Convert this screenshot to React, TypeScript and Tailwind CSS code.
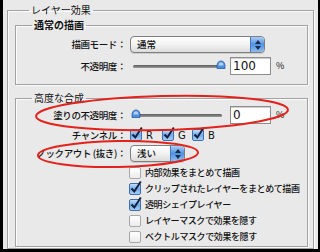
import React from 'react'

const jp = { fontFamily: '"Noto Sans CJK JP", "Noto Sans", sans-serif' }

function Stepper() {
  return (
    <div className="w-[14px] h-full rounded-r-[4px] bg-gradient-to-b from-[#a9cdf3] via-[#4f93e4] to-[#8cbcf0] border-l border-[#4a78b8] flex flex-col items-center justify-center gap-[2px]">
      <svg width="6" height="4" viewBox="0 0 6 4"><path d="M3 0L6 4H0Z" fill="#1d2b46" /></svg>
      <svg width="6" height="4" viewBox="0 0 6 4"><path d="M0 0H6L3 4Z" fill="#1d2b46" /></svg>
    </div>
  )
}

function Select({ value, width }: { value: string; width: string }) {
  return (
    <div className={`${width} h-[17px] flex flex-row rounded-[4px] border border-[#7f7f7f] bg-gradient-to-b from-white via-[#f2f2f2] to-[#dcdcdc] shadow-[0_1px_0_rgba(0,0,0,0.12)]`}>
      <div className="flex-1 pl-[6px] text-[9.5px] leading-[15px] font-medium text-[#111]" style={jp}>
        {value}
      </div>
      <Stepper />
    </div>
  )
}

function Knob({ pos }: { pos: string }) {
  return (
    <svg width="10" height="10" viewBox="0 0 10 10" className={`absolute top-[-5px] ${pos}`}>
      <path d="M1 6C1 2.5 2.8 1 5 1S9 2.5 9 6V8.5H1Z" fill="#4c8fdc" stroke="#2a5d9e" strokeWidth="0.8" />
      <path d="M2.5 5.5C2.6 3.5 3.6 2.3 5 2.3S7.4 3.5 7.5 5.5Z" fill="#c9e1fb" opacity="0.8" />
    </svg>
  )
}

function Slider({ knob }: { knob: 'left' | 'right' }) {
  return (
    <div className="relative w-[89px] h-[3px] ml-[3px] rounded-full bg-gradient-to-b from-[#5b5b5b] to-[#9a9a9a]">
      <Knob pos={knob === 'left' ? 'left-[-2px]' : 'left-[83px]'} />
    </div>
  )
}

function NumberBox({ value }: { value: string }) {
  return (
    <div className="w-[41px] h-[18px] ml-[8px] bg-white border border-[#8d8d8d] shadow-[inset_0_1px_1px_rgba(0,0,0,0.2)] pl-[2px] text-[12px] leading-[16px] text-[#111]" style={{ fontFamily: '"DejaVu Sans", sans-serif' }}>
      {value}
    </div>
  )
}

function Check({ checked }: { checked: boolean }) {
  return (
    <div className="relative w-[12px] h-[12px] shrink-0">
      <div
        className={
          checked
            ? 'w-[12px] h-[12px] rounded-[2px] border border-[#3f6ea8] bg-gradient-to-b from-[#c6defa] via-[#6ea8ec] to-[#a9cdf5]'
            : 'w-[12px] h-[12px] rounded-[2px] border border-[#a8a8a8] bg-gradient-to-b from-white to-[#ececec]'
        }
      />
      {checked && (
        <svg width="14" height="14" viewBox="0 0 14 14" className="absolute left-[0px] top-[-3px]">
          <path d="M2.5 8.5L5.3 11.5L11.8 1.5" fill="none" stroke="#14213a" strokeWidth="2" />
        </svg>
      )}
    </div>
  )
}

function Row({ label, children, h }: { label: string; children: React.ReactNode; h: string }) {
  return (
    <div className={`flex flex-row items-center ${h}`}>
      <div className="w-[111px] text-right whitespace-nowrap text-[9.5px] font-medium tracking-[-0.4px] text-[#111] pr-[1px]" style={jp}>
        {label}
      </div>
      <div className="flex flex-row items-center ml-[3px]">{children}</div>
    </div>
  )
}

const options = [
  { label: '内部効果をまとめて描画', checked: false },
  { label: 'クリップされたレイヤーをまとめて描画', checked: true },
  { label: '透明シェイプレイヤー', checked: true },
  { label: 'レイヤーマスクで効果を隠す', checked: false },
  { label: 'ベクトルマスクで効果を隠す', checked: false }
]

const box = 'border border-[#a2a2a2] shadow-[inset_1px_1px_0_#fbfbfb,1px_1px_0_#fbfbfb]'

export default function App() {
  return (
    <div className="relative w-[320px] h-[252px] bg-[#e9e9e9] border-l-[3px] border-r-[2px] border-b-[3px] border-black overflow-hidden" style={jp}>
      <fieldset className={`${box} mt-[3px] ml-[4px] mr-[4px] h-[246px] pl-[7px] pr-[5px]`}>
        <legend className="ml-[14px] px-[2px] text-[10px] leading-[14px] text-[#111]">レイヤー効果</legend>

        <fieldset className={`${box} mt-[1px] h-[67px] pt-[4px]`}>
          <legend className="ml-[16px] px-[2px] text-[10px] leading-[14px] font-bold text-[#111]">通常の描画</legend>
          <Row label="描画モード：" h="h-[17px]">
            <Select value="通常" width="w-[135px]" />
          </Row>
          <div className="h-[4px]" />
          <Row label="不透明度：" h="h-[18px]">
            <Slider knob="right" />
            <NumberBox value="100" />
            <span className="ml-[5px] text-[9px] text-[#111]">%</span>
          </Row>
        </fieldset>

        <fieldset className={`${box} mt-[6px] h-[156px] pt-[1px]`}>
          <legend className="ml-[16px] px-[2px] text-[10px] leading-[14px] text-[#111]">高度な合成</legend>
          <Row label="塗りの不透明度：" h="h-[18px]">
            <Slider knob="left" />
            <NumberBox value="0" />
            <span className="ml-[5px] text-[9px] text-[#111]">%</span>
          </Row>
          <div className="h-[4px]" />
          <Row label="チャンネル：" h="h-[14px]">
            <div className="flex flex-row items-center gap-[4px] w-[32px]">
              <Check checked />
              <span className="text-[10px] text-[#111]" style={{ fontFamily: '"DejaVu Sans", sans-serif' }}>R</span>
            </div>
            <div className="flex flex-row items-center gap-[4px] w-[30px]">
              <Check checked />
              <span className="text-[10px] text-[#111]" style={{ fontFamily: '"DejaVu Sans", sans-serif' }}>G</span>
            </div>
            <div className="flex flex-row items-center gap-[4px]">
              <Check checked />
              <span className="text-[10px] text-[#111]" style={{ fontFamily: '"DejaVu Sans", sans-serif' }}>B</span>
            </div>
          </Row>
          <div className="h-[3px]" />
          <Row label="ノックアウト (抜き)：" h="h-[17px]">
            <Select value="浅い" width="w-[55px]" />
          </Row>
          <div className="h-[3px]" />
          <div className="flex flex-col pl-[113px]">
            {options.map((opt, idx) => (
              <div key={idx} className="flex flex-row items-center h-[16px] gap-[4px]">
                <Check checked={opt.checked} />
                <span className="whitespace-nowrap text-[9px] font-medium tracking-[-0.4px] text-[#111]">{opt.label}</span>
              </div>
            ))}
          </div>
        </fieldset>
      </fieldset>

      <svg width="320" height="252" className="absolute left-[-3px] top-0 pointer-events-none">
        <ellipse cx="162" cy="113" rx="126" ry="17" transform="rotate(-1.5 162 113)" fill="none" stroke="#e3221c" strokeWidth="2" />
        <ellipse cx="118" cy="154" rx="80" ry="13" transform="rotate(-1 118 154)" fill="none" stroke="#e3221c" strokeWidth="2" />
      </svg>
    </div>
  )
}
